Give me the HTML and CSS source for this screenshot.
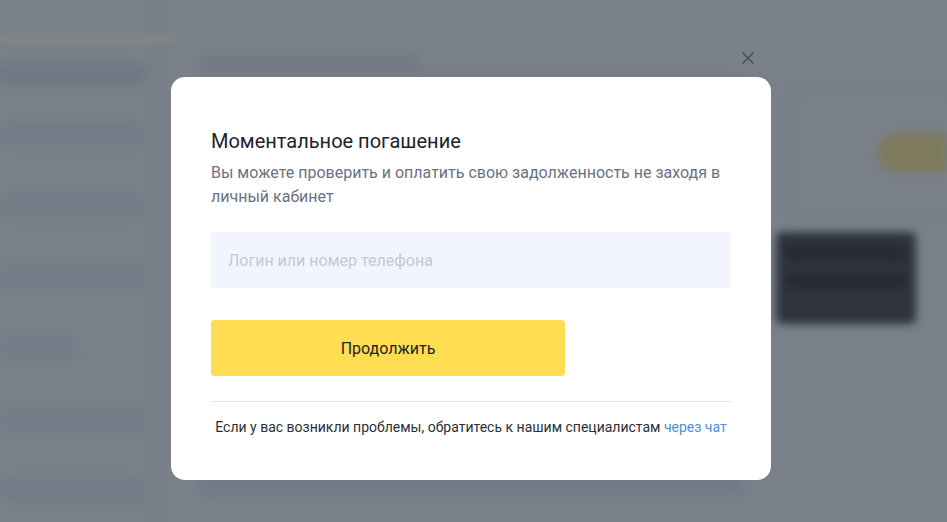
FILE: index.html
```html
<!DOCTYPE html>
<html lang="ru">

<head>
  <meta charset="UTF-8">
  <meta name="viewport" content="width=device-width, initial-scale=1.0">
  <title>Моментальное погашение</title>
  <link rel="stylesheet" href="styles.css">
</head>

<body>
  <!-- страница под модальным окном (размыта) -->
  <div class="page">
    <div class="sidebar">
      <div class="side-stripe"></div>
      <div class="side-pill wide"></div>
      <div class="side-pill"></div>
      <div class="side-pill"></div>
      <div class="side-pill"></div>
      <div class="side-pill short"></div>
      <div class="side-pill"></div>
      <div class="side-pill"></div>
    </div>
    <div class="main">
      <div class="main-tabs"></div>
      <div class="main-body"></div>
    </div>
    <div class="aside">
      <div class="aside-card">
        <div class="aside-btn"></div>
      </div>
      <div class="aside-tip">
        <div class="tip-line"></div>
        <div class="tip-line"></div>
      </div>
    </div>
  </div>

  <div class="overlay">
    <div class="modal">
      <button class="modal-close" aria-label="Закрыть">
        <svg width="12" height="12" viewBox="0 0 12 12">
          <path d="M1 1L11 11M11 1L1 11" stroke="#4a505b" stroke-width="1.6" stroke-linecap="round" />
        </svg>
      </button>
      <h2 class="modal-title">Моментальное погашение</h2>
      <p class="modal-text">Вы можете проверить и оплатить свою задолженность не заходя в личный кабинет</p>
      <input class="modal-input" type="text" placeholder="Логин или номер телефона">
      <button class="modal-btn">Продолжить</button>
      <div class="modal-footer">
        Если у вас возникли проблемы, обратитесь к нашим специалистам <a href="#" class="link">через чат</a>
      </div>
    </div>
  </div>
</body>

</html>
```

FILE: styles.css
```css
body {
  margin: 0;
  background-color: #7a808a;
  font-family: 'Roboto', 'Liberation Sans', sans-serif;
  overflow: hidden;
}

/* размытая страница на фоне */
.page {
  display: grid;
  grid-template-columns: 160px 1fr 175px;
  height: 522px;
  filter: blur(4px);
}

.sidebar {
  display: flex;
  flex-direction: column;
  gap: 47px;
  padding-top: 36px;
  border-right: 4px solid #747a86;
}

.side-stripe {
  width: 175px;
  height: 5px;
  margin-bottom: -26px;
  background-color: #8c8c78;
  border-radius: 3px;
}

.side-pill {
  height: 24px;
  margin-right: 8px;
  background-color: #757b87;
  border-radius: 12px;
}

.side-pill.wide {
  margin: 0 8px -10px -8px;
  background-color: #727883;
}

.side-pill.short {
  width: 76px;
}

.main {
  padding: 55px 0 0 40px;
}

.main-tabs {
  width: 220px;
  height: 18px;
  background-color: #737985;
  border-radius: 8px;
}

.main-body {
  height: 420px;
  margin: 4px 30px 0 0;
  background-color: #737a87;
  border-radius: 10px;
}

.aside {
  padding: 88px 0 0 14px;
}

.aside-card {
  height: 130px;
  padding: 42px 0 0 88px;
  box-sizing: border-box;
  border: 3px solid #737984;
  border-right: none;
  border-radius: 10px 0 0 10px;
}

.aside-btn {
  height: 40px;
  background-color: #7e7a5c;
  border-radius: 20px 0 0 20px;
}

.aside-tip {
  width: 140px;
  height: 92px;
  margin: 14px 0 0 -10px;
  padding: 14px 10px;
  box-sizing: border-box;
  background-color: #2e333c;
  border-radius: 6px;
}

.tip-line {
  height: 14px;
  margin-bottom: 14px;
  background-color: #262a32;
  border-radius: 7px;
}

/* модальное окно */
.overlay {
  position: fixed;
  inset: 0;
}

.modal {
  position: relative;
  width: 600px;
  margin: 77px 0 0 171px;
  padding: 50px 40px 43px;
  box-sizing: border-box;
  background-color: #fff;
  border-radius: 14px;
}

.modal-close {
  position: absolute;
  top: -25px;
  left: 571px;
  width: 12px;
  height: 12px;
  padding: 0;
  border: none;
  background: none;
  cursor: pointer;
}

.modal-close svg {
  display: block;
}

.modal-title {
  margin: 0;
  font-size: 20px;
  font-weight: 400;
  line-height: 28px;
  color: #1f232a;
}

.modal-text {
  margin: 6px 0 0;
  font-size: 16px;
  line-height: 24px;
  color: #6a7283;
}

.modal-input {
  display: block;
  width: 100%;
  height: 56px;
  margin-top: 23px;
  padding: 0 17px;
  box-sizing: border-box;
  border: none;
  border-radius: 4px;
  background-color: #f2f5fd;
  font-family: inherit;
  font-size: 16px;
  outline: none;
}

.modal-input::placeholder {
  color: #c2cad3;
}

.modal-btn {
  display: block;
  width: 354px;
  height: 56px;
  margin-top: 32px;
  border: none;
  border-radius: 4px;
  background-color: #ffdd52;
  font-family: inherit;
  font-size: 16px;
  color: #1f232a;
  cursor: pointer;
}

.modal-footer {
  margin-top: 25px;
  padding-top: 15px;
  border-top: 1px solid #e4e9ef;
  font-size: 14px;
  line-height: 20px;
  text-align: center;
  color: #2b2f36;
}

.link {
  color: #4a90e2;
  text-decoration: none;
}
```
